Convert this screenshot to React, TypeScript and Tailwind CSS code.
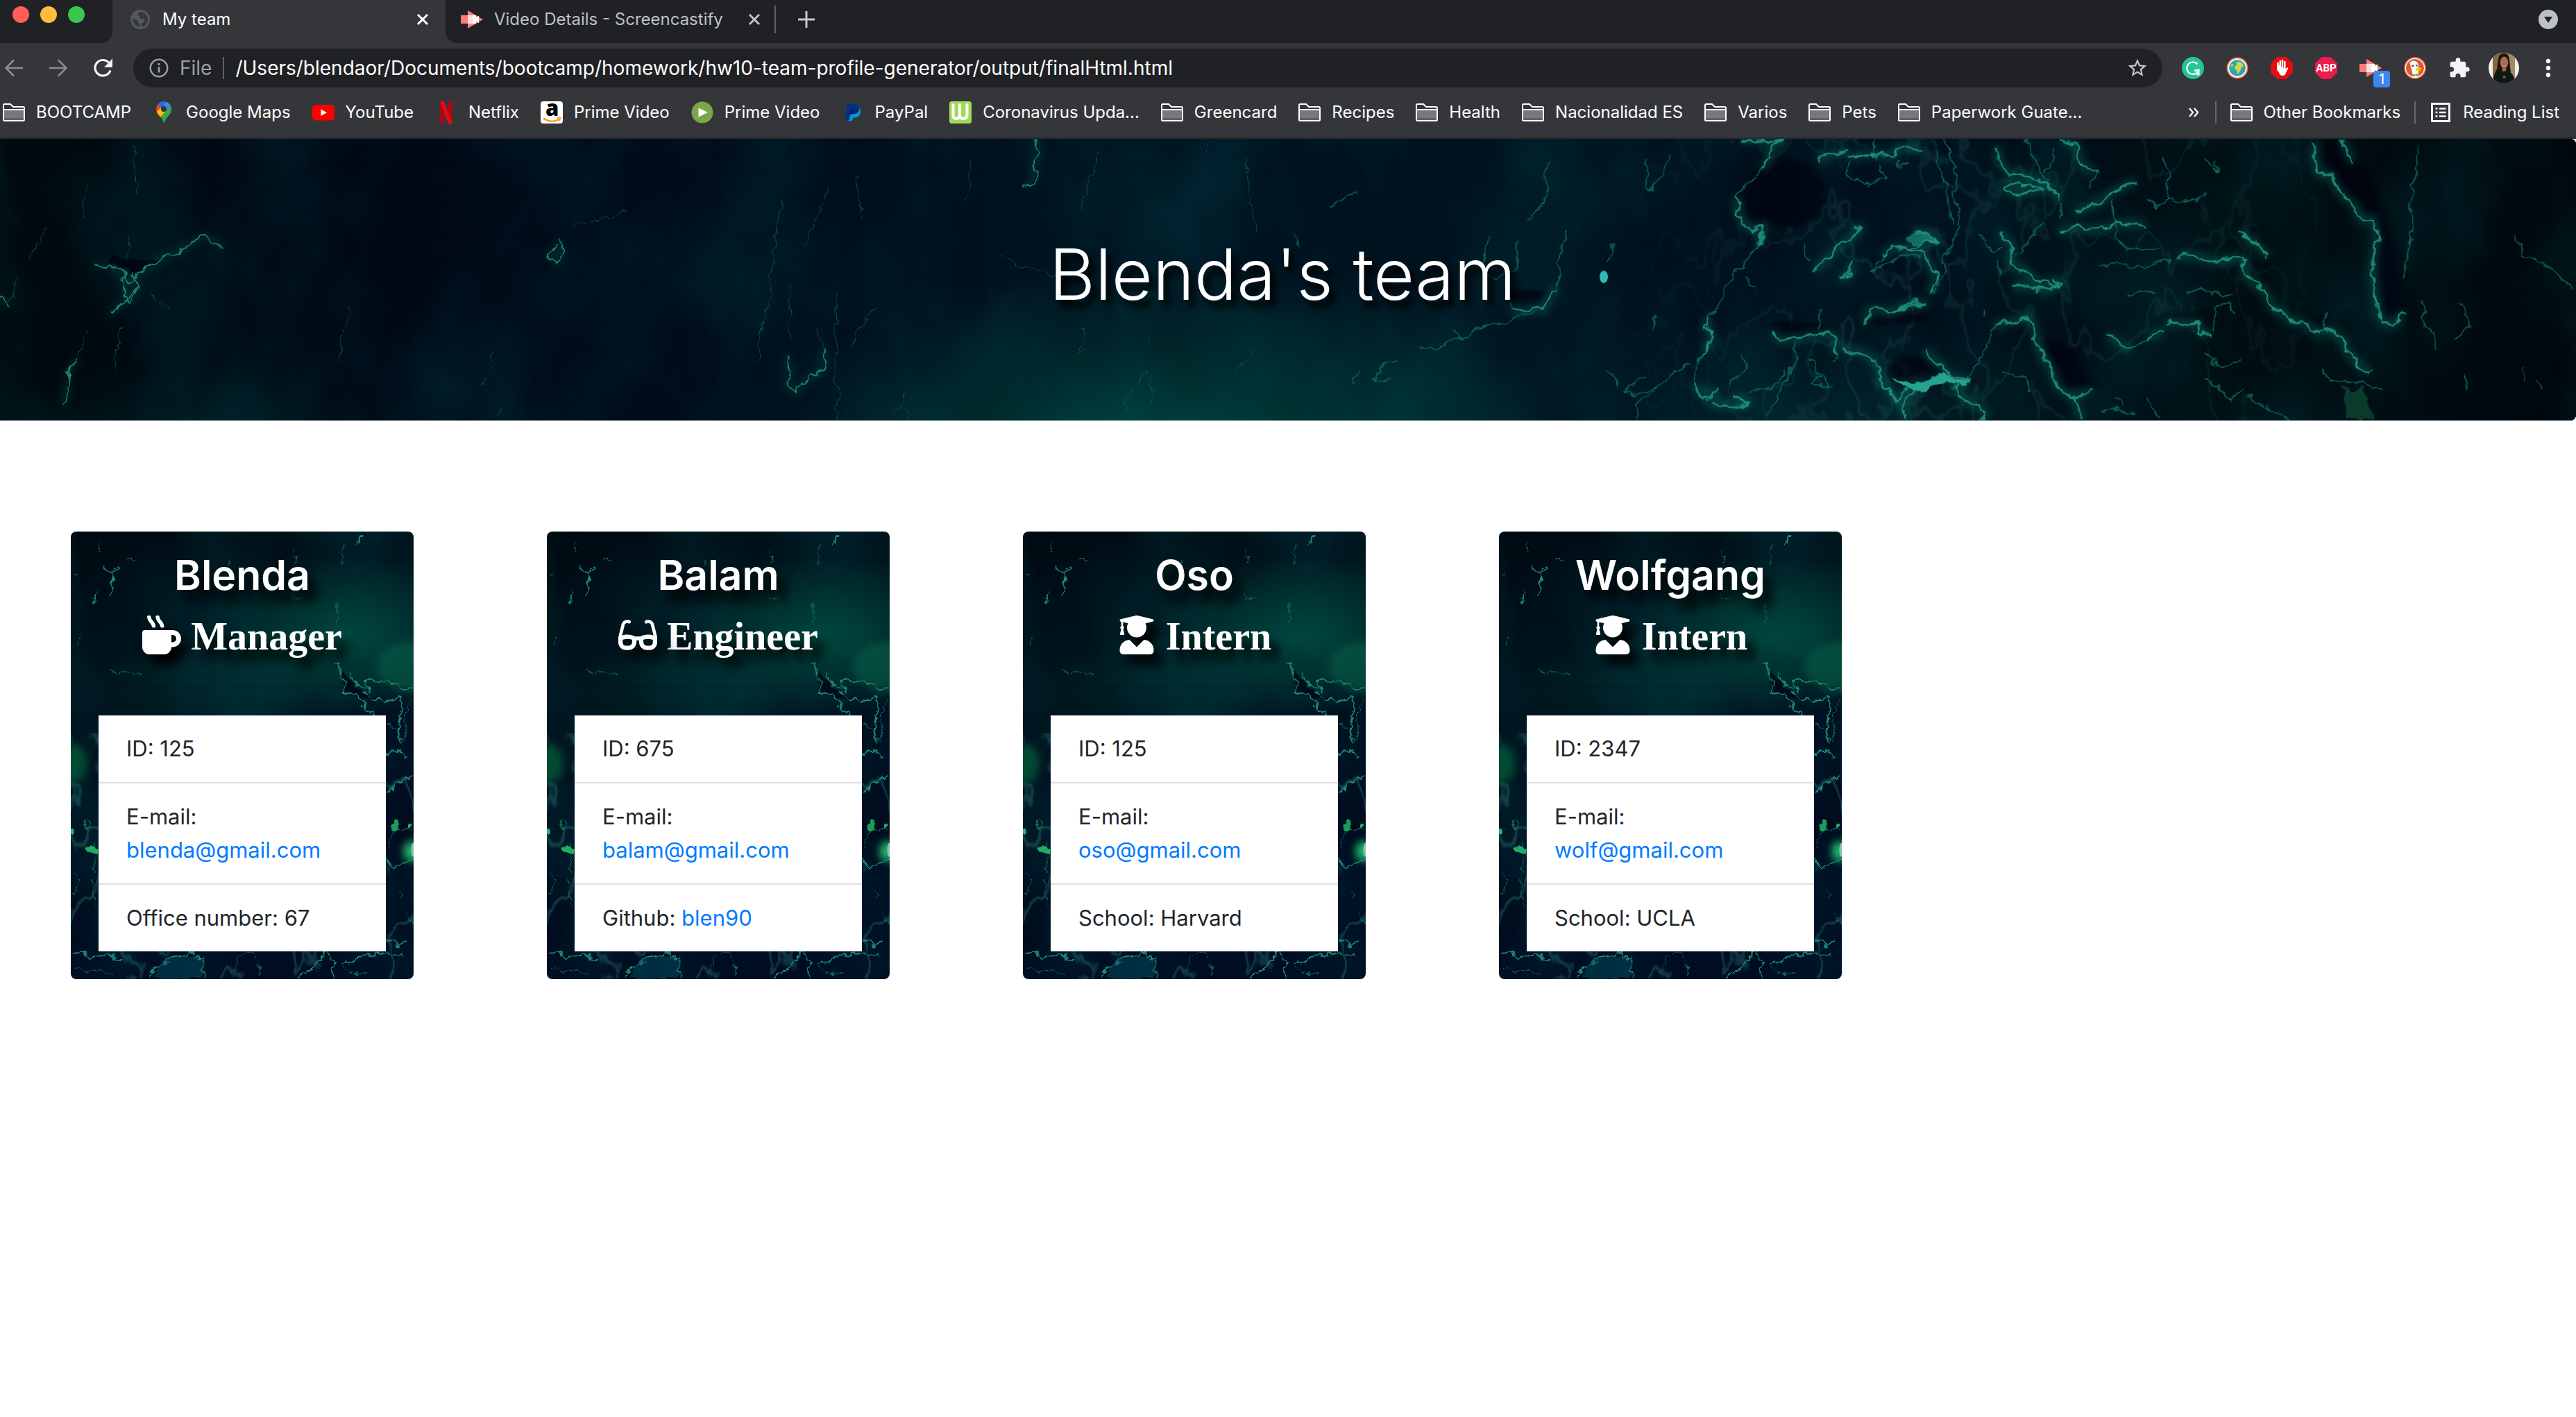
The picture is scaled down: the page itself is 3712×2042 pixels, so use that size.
import type { ReactNode } from "react";
import { FaGlasses, FaMugHot, FaUserGraduate } from "react-icons/fa";
import { MdExtension, MdStarBorder } from "react-icons/md";

/* ---------- painted-metal texture ---------- */

const heroLeft = [
  "M115 575 L132 580 L145 605 L158 645 L178 590 L196 550 L225 500 L243 458 L252 455 L262 480 L270 505",
  "M150 615 L152 700 L160 730 L168 660 L160 610",
  "M168 670 L150 740 L135 790",
  "M675 500 L668 535 L676 565 L684 530 L678 470",
  "M958 960 L955 1010 L962 1030 L955 1085 L967 1130 L980 1070 L992 1055 L1000 1000 L1002 930",
  "M1258 35 L1262 90 L1255 150 L1258 200 L1245 240",
  "M95 975 L84 1040 L82 1110 L76 1180",
  "M10 760 L0 705",
];

const heroLeftFaint = [
  "M182 690 L205 770",
  "M105 240 L103 320 L98 375",
  "M165 60 L166 270",
  "M155 430 L156 540",
  "M55 420 L36 560",
  "M24 620 L12 740",
  "M110 850 L95 975",
  "M145 850 L142 980 L144 1050",
  "M700 402 L740 375 L760 340",
  "M420 750 L428 780 L418 850 L410 1000",
  "M1468 30 L1462 100",
  "M1335 85 L1325 200 L1312 350",
  "M990 850 L1002 930",
  "M948 300 L935 700 L918 1000",
  "M1005 240 L990 400 L976 490",
  "M960 660 L958 900",
  "M1015 690 L1018 1240",
  "M600 940 L598 1010 L588 1090",
  "M605 1200 L603 1240",
  "M1065 770 L1045 830 L1035 920",
  "M1398 1180 L1400 1060 L1390 1030 L1385 1100",
  "M1375 1110 L1365 1180 L1370 1210",
  "M1098 1120 L1100 1240",
  "M1100 1170 L1085 1240",
  "M1210 540 L1240 570 L1255 600 L1285 625",
  "M1310 840 L1320 850 L1312 945 L1320 950",
  "M1530 920 L1500 1030",
  "M1515 110 L1518 300 L1530 440",
  "M1180 130 L1172 300",
  "M1040 180 L1048 380",
  "M1395 860 L1394 920",
];

const heroRight = [
  "M555 35 L580 30 L605 42 L590 60 L592 110 L580 160",
  "M548 280 L552 350 L558 400 L572 425 L583 402 L578 480",
  "M515 800 L512 850 L520 880 L510 960",
  "M650 135 L655 110 L685 80",
  "M685 110 L712 95 L740 105 L745 70 L775 75",
  "M865 60 L868 130 L880 180 L905 190 L920 215 L935 260 L942 300",
  "M945 30 L960 70 L970 150 L985 180",
  "M880 230 L905 235 L920 245 L905 262 L885 268 L878 245 Z",
  "M1035 215 L1010 250 L995 290 L975 330 L960 345",
  "M940 430 L965 415 L975 425 L1000 415 L1010 400 L1035 395 L1045 410",
  "M1252 50 L1250 110 L1256 185 L1270 188 L1280 260 L1300 320 L1308 380 L1322 380 L1326 460 L1320 600 L1324 700 L1326 780 L1335 830 L1348 830 L1358 780",
  "M1285 35 L1290 80 L1297 135",
  "M1160 425 L1180 490 L1195 535",
  "M1085 535 L1110 540 L1130 560 L1165 545 L1168 620 L1175 650 L1190 690 L1200 760 L1220 810 L1240 830 L1258 870 L1270 860 L1285 900 L1290 950 L1310 1020 L1318 1040",
  "M765 437 L780 440 L795 465 L770 495 L755 510 L740 500 L725 540",
  "M755 510 L775 520 L785 580 L792 640 L785 700",
  "M695 400 L700 425 L680 480 L655 560 L645 600",
  "M690 560 L688 610 L675 640",
  "M868 430 L885 500 L880 570 L900 600 L915 650 L940 670 L935 640 L945 655 L925 690 L910 670 L885 665",
  "M705 830 L710 765 L735 785 L755 745 L765 735 L778 742 L760 750 L740 780",
  "M592 870 L602 900 L630 890 L662 870 L668 900 L670 960",
  "M678 945 L692 945 L708 965 L720 1010 L722 1060 L730 1100 L742 1165 L755 1120 L775 1085",
  "M780 940 L785 980 L800 1010 L808 1060 L830 1070",
  "M862 840 L875 825 L900 812 L905 795 L912 870 L918 960 L930 1020 L938 1100 L955 1140 L965 1200 L968 1245",
  "M950 1140 L975 1125 L980 1110",
  "M1000 880 L1020 930 L1030 930",
  "M1050 890 L1068 860 M1070 825 L1110 828 L1112 860 L1125 880",
  "M275 750 L288 780 L300 760 L315 770 L325 690 L333 685",
  "M500 1090 L515 1160 L525 1110 M520 1180 L550 1180 L565 1170 L545 1140",
  "M812 1090 L830 1170 L850 1200 L850 1245",
  "M765 1130 L750 1200 L755 1245",
];

const heroRightFaint = [
  "M580 160 L565 220 L548 280",
  "M578 480 L562 560 L548 600 L530 740 L515 800",
  "M510 960 L500 1000 L498 1100",
  "M440 110 L440 200 L444 260 L460 190 L465 100",
  "M715 30 L717 110",
  "M745 110 L745 160 L755 120",
  "M800 30 L810 90 L818 180 L812 280 L822 340 L820 420 L810 480 L800 560 L800 620 L788 700",
  "M790 60 L800 200 L812 400",
  "M688 130 L685 190 L705 220 L730 210 L725 130",
  "M900 30 L912 130 L928 220",
  "M935 60 L925 180",
  "M978 240 L985 180",
  "M942 300 L940 380",
  "M1005 300 L1010 400 L1008 470 L1020 500 L1065 512",
  "M1050 290 L1060 325 L1075 300 L1110 290 L1120 265",
  "M1070 110 L1075 300",
  "M1115 115 L1135 175 L1130 120",
  "M1380 50 L1372 200 L1368 350 L1370 450 L1360 560 L1358 640",
  "M1380 720 L1385 820 L1395 870 L1398 935",
  "M1425 740 L1440 840 L1420 900",
  "M1265 790 L1265 870",
  "M725 540 L715 600 L750 530 L770 545",
  "M845 440 L855 500 L870 510",
  "M870 620 L865 560",
  "M925 380 L905 470 L895 520",
  "M830 1070 L850 960 L862 840",
  "M665 1000 L670 960",
  "M1030 930 L1050 890",
  "M1128 860 L1130 760 L1145 740 L1155 780",
  "M640 980 L650 1060 L638 1090 L665 1100 L650 1040",
  "M310 770 L270 820 L235 860 L215 890 L200 920 L165 945",
  "M205 850 L215 890",
  "M135 985 L120 1020 L107 1075 L130 1080",
  "M343 430 L335 560 L333 680",
  "M400 480 L392 560",
  "M250 450 L240 560 L255 640 L280 600 L285 480",
  "M320 120 L318 300 L295 380",
  "M90 260 L55 330",
  "M15 440 L20 500",
  "M395 1035 L405 1095",
  "M90 1030 L85 1090",
  "M440 1060 L410 1130 L445 1125 L470 1060 L490 1000",
  "M430 1245 L425 1180 L450 1130",
  "M540 1110 L560 1000 L555 960",
  "M585 1245 L600 1150 L620 1000 L618 920",
  "M565 1130 L600 1090 L610 1040",
  "M1115 960 L1130 1000 L1150 1010 L1165 980",
  "M1118 1075 L1140 1120 L1150 1160 L1165 1100",
  "M1170 1150 L1200 1200 L1220 1245",
  "M1260 1020 L1270 1075 L1310 1090 L1330 1120",
  "M1025 695 L1060 690 M1095 690 L1115 685 L1150 710",
  "M990 580 L1010 570 L1045 585 L1080 550",
  "M870 1040 L900 1060 L905 1120",
  "M1005 1150 L1020 1180 M1045 1140 L1060 1245",
  "M990 1195 L1015 1210 L1035 1220",
  "M1430 1040 L1436 1110 M1500 1030 L1505 1070 M1520 1060 L1527 1110",
  "M1495 450 L1505 530 L1540 590 L1565 680",
  "M450 780 L445 860 M650 750 L650 840 M850 770 L850 800",
  "M560 620 L572 690 M630 480 L635 560",
];

const heroShadows = [
  "M560 230 L590 100 L640 140 L660 240 L650 380 L620 410 L583 402 L558 395 Z",
  "M592 815 L665 835 L662 870 L630 890 L602 900 Z",
  "M710 765 L735 785 L755 770 L780 810 L740 830 L705 835 Z",
  "M925 890 L960 940 L985 1100 L955 1135 L938 1100 Z",
  "M740 1065 L780 1040 L800 1030 L785 980 L760 960 L735 1000 Z",
  "M1256 60 L1285 40 L1320 200 L1350 500 L1358 780 L1338 830 L1326 600 L1322 380 L1280 250 Z",
  "M270 680 L325 690 L310 750 L285 770 Z",
  "M1225 800 L1265 800 L1258 860 Z",
  "M1072 800 L1110 770 L1128 860 L1110 820 Z",
];

const cardCracks = [
  "M190 172 L215 180 L228 190 L250 175 L256 182 L232 198 L228 240 L220 270",
  "M1125 480 L1150 495 L1150 530 L1165 545 L1165 580 L1220 590 L1240 615 L1280 650",
  "M1190 520 L1205 545 L1245 560 L1270 575 L1250 545 L1270 535 L1290 545 L1340 540 L1370 550 L1385 545 L1400 570 L1445 560",
  "M1240 575 L1290 600 L1345 605 L1390 590 L1392 640 L1385 700 L1390 740",
  "M1335 775 L1390 765 L1415 790",
  "M1335 905 L1360 880 L1400 860 L1445 850",
  "M1335 1115 L1365 1150 L1390 1130 L1445 1115",
  "M375 1495 L400 1465 L440 1455 L470 1428 L520 1430 L550 1415 L560 1432 L605 1430 L600 1450 L590 1470 L605 1500",
  "M975 1495 L1030 1475 L1065 1440 L1085 1415 L1105 1415 L1112 1430 L1130 1445 L1110 1465 L1120 1500",
  "M1155 1455 L1200 1445 L1240 1425 L1330 1420 L1400 1425",
  "M62 1415 L110 1418 L140 1435 L220 1420 L240 1440 L265 1440",
  "M1335 1375 L1385 1385 L1375 1400 L1410 1380",
  "M160 250 L150 290 L165 280",
  "M1215 100 L1228 90 L1230 65",
];

const cardFaint = [
  "M290 152 L318 150",
  "M175 90 L172 125",
  "M75 200 L90 195",
  "M90 425 L100 400",
  "M1162 100 L1155 170",
  "M1138 290 L1132 350",
  "M960 120 L970 160",
  "M700 150 L695 170",
  "M215 500 L250 515 L300 510 L350 520",
  "M950 250 L965 280 L995 270",
  "M1335 680 L1370 690 L1400 730 L1415 700",
  "M1410 740 L1412 640 L1430 600",
  "M1335 1080 L1375 1020 L1440 1020",
  "M1380 1215 L1400 1230 L1390 1245",
  "M705 1480 L735 1455 L740 1430 L765 1415 L800 1420 L820 1450 L825 1490",
  "M1155 1460 L1200 1490 L1260 1480",
  "M80 1460 L120 1480 L180 1475 L230 1490",
  "M1420 1290 L1440 1330",
  "M70 1160 L100 1180 L80 1230 M145 1180 L165 1260",
  "M160 1060 L158 1160",
];

function TextureFilters() {
  return (
    <svg aria-hidden="true" className="absolute size-0">
      <defs>
        <filter id="rough" x="-5%" y="-5%" width="110%" height="110%">
          <feTurbulence type="fractalNoise" baseFrequency="0.05" numOctaves="3" seed="4" result="n" />
          <feDisplacementMap in="SourceGraphic" in2="n" scale="18" xChannelSelector="R" yChannelSelector="G" />
        </filter>
        <filter id="rough-fine" x="-5%" y="-5%" width="110%" height="110%">
          <feTurbulence type="fractalNoise" baseFrequency="0.1" numOctaves="3" seed="9" result="n" />
          <feDisplacementMap in="SourceGraphic" in2="n" scale="12" xChannelSelector="R" yChannelSelector="G" />
        </filter>
        <filter id="soft" x="-50%" y="-50%" width="200%" height="200%">
          <feGaussianBlur stdDeviation="6" />
        </filter>
        <filter id="veins" x="0" y="0" width="100%" height="100%">
          <feTurbulence type="fractalNoise" baseFrequency="0.012 0.007" numOctaves="4" seed="21" />
          <feColorMatrix values="0 0 0 0 0.06  0 0 0 0 0.5  0 0 0 0 0.42  1 0 0 0 0" />
          <feComponentTransfer>
            <feFuncA type="table" tableValues="0 0 0 0 0 0 0 0 0 0 0 0 0 0 0.6 0 0 0 0 0 0 0 0 0 0 0 0 0 0 0" />
          </feComponentTransfer>
        </filter>
        <filter id="mottle" x="0" y="0" width="100%" height="100%">
          <feTurbulence type="fractalNoise" baseFrequency="0.006 0.004" numOctaves="6" seed="2" />
          <feColorMatrix values="0 0 0 0 0  0 0 0 0 0.2  0 0 0 0 0.22  0 1.6 0 0 -0.55" />
        </filter>
      </defs>
    </svg>
  );
}

function Strokes({ paths, className }: { paths: string[]; className: string }) {
  return (
    <g className={className} fill="none" strokeLinejoin="round">
      {paths.map((d) => (
        <path key={d} d={d} vectorEffect="non-scaling-stroke" />
      ))}
    </g>
  );
}

function HeroTexture() {
  return (
    <svg
      aria-hidden="true"
      viewBox="0 0 3712 406"
      preserveAspectRatio="xMidYMin slice"
      className="absolute inset-0 size-full"
    >
      <defs>
        <linearGradient id="hero-base">
          <stop offset="0" stopColor="#000a0f" />
          <stop offset="0.12" stopColor="#000915" />
          <stop offset="0.28" stopColor="#000d1b" />
          <stop offset="0.45" stopColor="#001320" />
          <stop offset="0.6" stopColor="#00121e" />
          <stop offset="0.75" stopColor="#000e1a" />
          <stop offset="0.86" stopColor="#000f14" />
          <stop offset="1" stopColor="#00070d" />
        </linearGradient>
        <radialGradient id="hero-glow">
          <stop offset="0" stopColor="#00443f" />
          <stop offset="0.5" stopColor="#00302f" stopOpacity="0.7" />
          <stop offset="1" stopColor="#00302f" stopOpacity="0" />
        </radialGradient>
        <linearGradient id="hero-fade">
          <stop offset="0.62" stopColor="#000" />
          <stop offset="0.72" stopColor="#fff" />
          <stop offset="0.85" stopColor="#bbb" />
          <stop offset="0.93" stopColor="#000" />
        </linearGradient>
        <mask id="hero-mask">
          <rect width="3712" height="406" fill="url(#hero-fade)" />
        </mask>
      </defs>
      <rect width="3712" height="406" fill="url(#hero-base)" />
      <ellipse cx="1700" cy="440" rx="640" ry="250" fill="url(#hero-glow)" />
      <ellipse cx="300" cy="430" rx="300" ry="120" fill="url(#hero-glow)" opacity="0.3" />
      <ellipse cx="2650" cy="430" rx="420" ry="180" fill="url(#hero-glow)" opacity="0.4" />
      <rect width="3712" height="406" filter="url(#mottle)" opacity="0.2" />
      <g mask="url(#hero-mask)">
        <rect width="3712" height="406" filter="url(#veins)" opacity="0.22" />
      </g>
      <g transform="translate(1850 -10) scale(1.1875 0.3333)">
        {heroShadows.map((d) => (
          <path key={d} d={d} fill="#00030a" opacity="0.6" filter="url(#soft)" />
        ))}
      </g>
      <g filter="url(#soft)" opacity="0.4">
        <g transform="translate(1850 -10) scale(1.1875 0.3333)">
          <Strokes paths={heroRight} className="stroke-[#0c6a5c] stroke-[14px]" />
        </g>
        <g transform="translate(0 -10) scale(1.186 0.3333)">
          <Strokes paths={heroLeft} className="stroke-[#08483f] stroke-[10px]" />
        </g>
      </g>
      <g filter="url(#rough)">
        <g transform="translate(0 -10) scale(1.186 0.3333)">
          <path d="M125 550 L195 550 L160 620 Z" fill="#00020a" opacity="0.7" />
          <Strokes paths={heroLeftFaint} className="stroke-[#0d5c55] stroke-1 opacity-80" />
          <Strokes paths={heroLeft} className="stroke-[#1a8570] stroke-2" />
        </g>
        <g transform="translate(1850 -10) scale(1.1875 0.3333)">
          <Strokes paths={heroRightFaint} className="stroke-[#0d6259] stroke-2" />
          <Strokes paths={heroRight} className="stroke-[#1b8c79] stroke-[3px]" />
          <path d="M740 1065 L765 1080 L800 1040 L812 1070 L835 1075 L822 1100 L800 1090 L765 1130 Z" fill="#25a390" />
          <path d="M1285 1100 L1310 1110 L1318 1190 L1325 1245 L1290 1245 Z" fill="#1b7a50" opacity="0.4" />
          <path d="M765 440 L780 440 L795 465 L775 490 L755 475 Z" fill="#1f9c86" opacity="0.6" />
        </g>
      </g>
      <ellipse cx="2311" cy="199" rx="6" ry="9" fill="#35b7b3" />
    </svg>
  );
}

function CardTexture() {
  return (
    <svg
      aria-hidden="true"
      viewBox="0 0 494 644"
      preserveAspectRatio="xMidYMid slice"
      className="absolute inset-0 size-full"
    >
      <defs>
        <linearGradient id="card-base" x1="0" y1="0" x2="0.3" y2="1">
          <stop offset="0" stopColor="#000a12" />
          <stop offset="0.35" stopColor="#00151e" />
          <stop offset="0.6" stopColor="#000f1e" />
          <stop offset="1" stopColor="#000c20" />
        </linearGradient>
        <radialGradient id="card-glow">
          <stop offset="0" stopColor="#00463c" />
          <stop offset="0.5" stopColor="#003a34" stopOpacity="0.65" />
          <stop offset="1" stopColor="#003a34" stopOpacity="0" />
        </radialGradient>
      </defs>
      <rect width="494" height="644" fill="url(#card-base)" />
      <ellipse cx="400" cy="150" rx="220" ry="115" fill="url(#card-glow)" />
      <ellipse cx="230" cy="225" rx="200" ry="80" fill="url(#card-glow)" opacity="0.35" />
      <ellipse cx="490" cy="195" rx="50" ry="36" fill="#11704f" opacity="0.45" filter="url(#soft)" />
      <rect width="494" height="644" filter="url(#mottle)" opacity="0.2" />
      <rect y="290" width="494" height="354" filter="url(#veins)" opacity="0.45" />
      <ellipse cx="4" cy="334" rx="20" ry="28" fill="#064a31" filter="url(#soft)" />
      <g filter="url(#rough-fine)">
        <g transform="translate(-22 -26) scale(0.357 0.446)">
          <path d="M1140 490 L1165 520 L1240 575 L1340 606 L1225 595 L1165 580 Z" fill="#000610" opacity="0.7" />
          <Strokes paths={cardFaint} className="stroke-[#12705f] stroke-1" />
          <Strokes paths={cardCracks} className="stroke-[#1e8a76] stroke-2" />
          <path d="M470 1430 L600 1435 L590 1500 L400 1500 L410 1465 Z" fill="#0a4a5c" opacity="0.5" />
          <path d="M115 1080 L145 1070 L175 1085 L170 1100 L125 1090 Z" fill="#1fae62" />
          <circle cx="130" cy="1005" r="12" stroke="#126e48" strokeWidth="5" fill="none" />
          <circle cx="72" cy="1022" r="12" fill="#22b568" />
          <circle cx="1370" cy="1008" r="18" fill="#1a9a5c" />
          <circle cx="1432" cy="1010" r="10" fill="#22b568" />
        </g>
      </g>
      <ellipse cx="490" cy="460" rx="11" ry="15" fill="#1fb46c" filter="url(#soft)" />
      <ellipse cx="493" cy="458" rx="3" ry="10" fill="#8fc0a6" />
    </svg>
  );
}

/* ---------- browser icons ---------- */

function Icon({ children, size = "size-8" }: { children: ReactNode; size?: string }) {
  return (
    <svg aria-hidden="true" viewBox="0 0 32 32" className={`${size} shrink-0`} fill="none">
      {children}
    </svg>
  );
}

const Folder = () => (
  <Icon>
    <path d="M1 5.500q0-1.500 1.500-1.500H11l4 4h14.500q1.500 0 1.500 1.500V26.500q0 1.500-1.500 1.500h-27Q1 28 1 26.500Z" fill="#35363a" stroke="#fff" strokeWidth="2" />
    <path d="M2 13h28v14H2z" fill="#77787b" />
    <path d="M2 24h28v3H2z" fill="#616265" />
    <path d="M1 12h30" stroke="#fff" strokeWidth="2" />
  </Icon>
);

const MapPin = () => (
  <Icon>
    <path d="M5 11.500A11 11 0 0 1 7.800 4L16 11 9 19.500Q5 15 5 11.500Z" fill="#ea4335" />
    <path d="M7.600 4.200A11 11 0 0 1 19.500.800L13 8.500Z" fill="#1a73e8" />
    <path d="M19.500.800A11 11 0 0 1 26 6.500L16 18.500 13 8.500Z" fill="#4285f4" />
    <path d="M26 6.500Q29 13 24 19.500C20 24 17.500 27 16 32 15 27.500 13.500 25 11.500 22.500Z" fill="#34a853" />
    <path d="M12.600 8.600 5.600 15Q7 19 11.500 22.800L19.500 13.500Z" fill="#fbbc04" />
    <circle cx="16" cy="11" r="4.200" fill="#35363a" />
  </Icon>
);

const YouTube = () => (
  <Icon>
    <rect y="5" width="32" height="22.500" rx="5" fill="#f00" />
    <path d="m12.500 11.500 8.500 4.800-8.500 4.700z" fill="#fff" />
  </Icon>
);

const Netflix = () => (
  <Icon>
    <path d="M7 0h6v32H7zM19 0h6v32h-6z" fill="#b1060f" />
    <path d="M7 0h6l12 32h-6z" fill="#e50914" />
  </Icon>
);

const Amazon = () => (
  <Icon>
    <rect width="32" height="32" rx="4" fill="#fff" />
    <text x="7" y="21" className="fill-black font-['Open_Sans',sans-serif] text-[31px] font-extrabold">
      a
    </text>
    <path d="M4 24.500q12 8 23 1" stroke="#f90" strokeWidth="2.200" />
    <path d="M23.500 24q5-1.200 5 0t-2 4.500" stroke="#f90" strokeWidth="1.600" />
  </Icon>
);

const PlayDisc = () => (
  <Icon>
    <circle cx="16" cy="16" r="15.500" fill="#7aa748" />
    <path d="M10.500 9.500 24 16l-13.500 6.500z" fill="#fff" />
  </Icon>
);

const PayPal = () => (
  <Icon>
    <path d="M11 9h13q4 2 2.800 8-1.800 6.500-8.500 6.500h-2L15 28H9.500z" fill="#009cde" />
    <path d="M8 4h11q7 .5 6 7.500-1.500 7-9 7h-3.500L11 27H4.500z" fill="#003087" />
    <path d="M13 11h12q-1.500 7.500-9 7.500h-4.300z" fill="#012169" />
  </Icon>
);

const Worldometer = () => (
  <Icon>
    <rect width="32" height="32" rx="3.500" fill="#a5d95a" />
    <path d="M5.500 5v15q0 5 4.500 5t5-5V5m0 15q0 5 5 5t5.500-5V5" stroke="#fff" strokeWidth="4" strokeLinecap="round" />
  </Icon>
);

const ReadingList = () => (
  <Icon>
    <rect x="3.500" y="3.500" width="25" height="25" stroke="#f1f3f4" strokeWidth="3" />
    <path d="M8.500 10.500h3m2.500 0h9.500M8.500 16h3m2.500 0h9.500M8.500 21.500h3m2.500 0h9.500" stroke="#f1f3f4" strokeWidth="2.500" />
  </Icon>
);

const Screencastify = () => (
  <Icon>
    <path d="M10 3v26l22-13z" fill="#ff7f7f" />
    <path d="M0 10h17v12H0z" fill="#ff7b7b" />
    <path d="M10 10h12v3.500l4-3v11l-4-3V22H10z" fill="#fff" />
    <path d="M10 10h7v12h-7z" fill="#fdd" />
  </Icon>
);

const Close = ({ tint }: { tint: string }) => (
  <svg aria-hidden="true" viewBox="0 0 18 18" className="size-[18px]">
    <path d="m2 2 14 14M16 2 2 16" stroke={tint} strokeWidth="3" />
  </svg>
);

const BackArrow = () => (
  <Icon>
    <path d="M29 16H5M16 4.500 4.500 16 16 27.500" stroke="#8a8b8e" strokeWidth="2.600" />
  </Icon>
);

const ForwardArrow = () => (
  <Icon>
    <path d="M3 16h24M16 4.500 27.500 16 16 27.500" stroke="#8a8b8e" strokeWidth="2.600" />
  </Icon>
);

const Reload = () => (
  <Icon>
    <path d="M27 19.500A11.300 11.300 0 1 1 24.500 8" stroke="#f1f3f4" strokeWidth="3.200" />
    <path d="M30 2.500V15H18z" fill="#f1f3f4" />
  </Icon>
);

const Info = () => (
  <Icon size="size-7">
    <circle cx="16" cy="16" r="14" stroke="#9aa0a6" strokeWidth="2.800" />
    <path d="M16 14v9.500M16 8v3.300" stroke="#9aa0a6" strokeWidth="3.200" />
  </Icon>
);

const DimGlobe = () => (
  <Icon size="size-7">
    <circle cx="16" cy="16" r="16" fill="#55585c" />
    <path d="M18 3q-6 1-7 6l4 1 1 5h6q3 3-1 6l-3 1v6q10-1 11-12Q28 5 18 3ZM3.500 13q4 4 9 4v5l3 2v4.500Q4 27 3.500 13Z" fill="#37383c" />
  </Icon>
);

const Grammarly = () => (
  <Icon>
    <circle cx="16" cy="16" r="16" fill="#27c39b" />
    <path d="M22.500 10.500A8.700 8.700 0 1 0 24 19.500h-6" stroke="#fff" strokeWidth="2.200" />
    <path d="M24.500 17v8.500h-2V19.500H18" stroke="#fff" strokeWidth="2" />
  </Icon>
);

const Earth = () => (
  <Icon>
    <circle cx="16" cy="16" r="15.500" fill="#f06a43" />
    <circle cx="16" cy="16" r="13.700" fill="#fff" />
    <circle cx="16" cy="16" r="11.800" fill="#2fa3b8" />
    <path d="M15 7.500q5-1.500 8 1.500l2 4-3 2.500-1.500 4-3 4.500h-1.500l-1-5-3.500-2.500 1-3 2.500-2zM7.500 10l3 .5-1 3.500-3 1z" fill="#c9d84a" />
  </Icon>
);

const AdBlock = () => (
  <Icon>
    <path d="M9.500 0h13L32 9.500v13L22.500 32h-13L0 22.500v-13z" fill="#e40d13" />
    <path d="M9.500 10v7l3.500 8q1 2 4 2 4 0 5-4l3.500-7q-1.500-1.500-3 .5l-1 1.500" fill="#fff" />
    <path d="M10.500 18V9m3.300 8V6M17 17V5m3.300 13V7" stroke="#fff" strokeWidth="2.500" strokeLinecap="round" />
    <path d="M9.300 16h12.200v5H10z" fill="#fff" />
  </Icon>
);

const AdBlockPlus = () => (
  <Icon>
    <path d="M9.500 0h13L32 9.500v13L22.500 32h-13L0 22.500v-13z" fill="#ed1c48" />
    <text x="16" y="21" textAnchor="middle" className="fill-white font-[Roboto,sans-serif] text-[15px] font-bold">
      ABP
    </text>
  </Icon>
);

const DuckDuck = () => (
  <Icon>
    <circle cx="16" cy="16" r="16" fill="#de5833" />
    <circle cx="16" cy="16" r="13.600" stroke="#fff" strokeWidth="1.400" />
    <path d="M8.500 9q1-3.500 6-3.500 6 1 6.500 7l-1 5 2 10.500q-5 2.500-9 0L11 18Z" fill="#fff" />
    <path d="M17.500 16.500q5-2 8.500 0-2 1.500-5 2 3 .5 3.500 1.500-4 1.500-7.500-.5z" fill="#fdd20a" />
    <circle cx="12.800" cy="13" r="1.600" fill="#2d4f8e" />
    <circle cx="18.500" cy="12.500" r="1.300" fill="#2d4f8e" />
    <path d="m12.500 24 4 1.500 4.500-2v5l-4.500-1.500-4 1.500z" fill="#5bb547" />
  </Icon>
);

const Avatar = () => (
  <svg aria-hidden="true" viewBox="0 0 44 44" className="size-11">
    <defs>
      <clipPath id="avatar-clip">
        <circle cx="22" cy="22" r="22" />
      </clipPath>
    </defs>
    <g clipPath="url(#avatar-clip)">
      <path d="M0 0h44v44H0z" fill="#efeee9" />
      <path d="M6 0h32v44H6z" fill="#80683f" />
      <path d="M29 0h9v44h-9z" fill="#a18a5c" />
      <path d="M14 10q1-9 8-9t8 9l2 20v14H7q0-14 5-20z" fill="#1d120e" />
      <ellipse cx="22.500" cy="14" rx="5.800" ry="8.500" fill="#a86e55" />
      <path d="M19.500 20h6v7h-6z" fill="#9a6049" />
      <path d="M19.500 18q3 2 6 0-3 3.500-6 0z" fill="#ecd8d0" />
      <path d="M7 44q0-15 11-18 4 2 8 0 11 2 12 18z" fill="#0c1a14" />
      <circle cx="22.500" cy="35" r="2" fill="#8a5a48" />
    </g>
  </svg>
);

/* ---------- browser chrome ---------- */

const bookmarks: { label: string; icon: ReactNode }[] = [
  { label: "BOOTCAMP", icon: <Folder /> },
  { label: "Google Maps", icon: <MapPin /> },
  { label: "YouTube", icon: <YouTube /> },
  { label: "Netflix", icon: <Netflix /> },
  { label: "Prime Video", icon: <Amazon /> },
  { label: "Prime Video", icon: <PlayDisc /> },
  { label: "PayPal", icon: <PayPal /> },
  { label: "Coronavirus Upda...", icon: <Worldometer /> },
  { label: "Greencard", icon: <Folder /> },
  { label: "Recipes", icon: <Folder /> },
  { label: "Health", icon: <Folder /> },
  { label: "Nacionalidad ES", icon: <Folder /> },
  { label: "Varios", icon: <Folder /> },
  { label: "Pets", icon: <Folder /> },
  { label: "Paperwork Guate...", icon: <Folder /> },
];

const extensions: { label: string; icon: ReactNode }[] = [
  { label: "Grammarly", icon: <Grammarly /> },
  { label: "Earth", icon: <Earth /> },
  { label: "AdBlock", icon: <AdBlock /> },
  { label: "Adblock Plus", icon: <AdBlockPlus /> },
];

function Bookmark({ label, icon }: { label: string; icon: ReactNode }) {
  return (
    <button type="button" className="flex shrink-0 items-center gap-4 whitespace-nowrap">
      {icon}
      {label}
    </button>
  );
}

function ToolButton({ label, children }: { label: string; children: ReactNode }) {
  return (
    <button type="button" aria-label={label} className="relative flex w-16 shrink-0 items-center justify-center">
      {children}
    </button>
  );
}

function TabStrip() {
  return (
    <div className="flex h-[62px] bg-[#35363a]">
      <div className="flex w-[162px] shrink-0 gap-4 rounded-br-2xl bg-[#202124] pt-[9px] pl-[18px]">
        <button type="button" aria-label="Close window" className="size-6 rounded-full bg-[#ff5f57]" />
        <button type="button" aria-label="Minimize window" className="size-6 rounded-full bg-[#febc40]" />
        <button type="button" aria-label="Zoom window" className="size-6 rounded-full bg-[#3ac84c]" />
      </div>
      <div className="flex w-[480px] shrink-0 items-center pr-6 pb-[6px] pl-[26px]">
        <button type="button" className="flex items-center gap-[18px] text-white">
          <DimGlobe />
          My team
        </button>
        <button type="button" aria-label="Close tab" className="ml-auto">
          <Close tint="#fff" />
        </button>
      </div>
      <div className="flex grow items-center rounded-bl-2xl bg-[#202124] pr-[26px] pb-[6px] pl-[22px]">
        <button type="button" className="flex items-center gap-4 text-[#bdc1c6]">
          <Screencastify />
          Video Details - Screencastify
        </button>
        <button type="button" aria-label="Close tab" className="ml-9">
          <Close tint="#bdc1c6" />
        </button>
        <div className="ml-5 h-10 w-0.5 bg-[#5f6165]" />
        <button type="button" aria-label="New tab" className="ml-8">
          <svg aria-hidden="true" viewBox="0 0 24 24" className="size-6">
            <path d="M12 0v24M0 12h24" stroke="#c5c8cc" strokeWidth="3" />
          </svg>
        </button>
        <button type="button" aria-label="Search tabs" className="ml-auto">
          <svg aria-hidden="true" viewBox="0 0 28 28" className="size-7">
            <circle cx="14" cy="14" r="14" fill="#bdc1c6" />
            <path d="M8 10h12l-6 9z" fill="#202124" />
          </svg>
        </button>
      </div>
    </div>
  );
}

function Toolbar() {
  return (
    <div className="flex items-center bg-[#35363a] pt-2 pr-2 pl-1">
      <div className="mr-7 flex gap-8">
        <button type="button" aria-label="Back">
          <BackArrow />
        </button>
        <button type="button" aria-label="Forward">
          <ForwardArrow />
        </button>
        <button type="button" aria-label="Reload">
          <Reload />
        </button>
      </div>
      <div className="mr-3 flex h-14 grow items-center rounded-full bg-[#202124] pr-5 pl-[23px] text-[28px]">
        <Info />
        <label htmlFor="address" className="ml-4 text-[#9aa0a6]">
          File
        </label>
        <div className="ml-4 h-8 w-0.5 bg-[#5f6165]" />
        <input
          id="address"
          type="text"
          className="h-full min-w-0 grow bg-transparent pl-4 leading-10 text-white outline-none"
          defaultValue="/Users/blendaor/Documents/bootcamp/homework/hw10-team-profile-generator/output/finalHtml.html"
        />
        <button type="button" aria-label="Bookmark this page">
          <MdStarBorder className="size-8 text-[#c4c7cb]" />
        </button>
      </div>
      {extensions.map((e) => (
        <ToolButton key={e.label} label={e.label}>
          {e.icon}
        </ToolButton>
      ))}
      <ToolButton label="Screencastify">
        <Screencastify />
        <span className="absolute top-5 left-9 h-6 w-6 rounded-sm bg-[#3b87ee] text-center text-[20px] leading-6 text-white">
          1
        </span>
      </ToolButton>
      <ToolButton label="DuckDuckGo">
        <DuckDuck />
      </ToolButton>
      <ToolButton label="Extensions">
        <MdExtension className="size-8 text-[#f1f3f4]" />
      </ToolButton>
      <ToolButton label="Profile">
        <Avatar />
      </ToolButton>
      <ToolButton label="Menu">
        <svg aria-hidden="true" viewBox="0 0 8 28" className="h-7 w-2" fill="#f1f3f4">
          <circle cx="4" cy="4" r="3.200" />
          <circle cx="4" cy="14" r="3.200" />
          <circle cx="4" cy="24" r="3.200" />
        </svg>
      </ToolButton>
    </div>
  );
}

function BookmarkBar() {
  return (
    <div className="flex h-[74px] items-center border-b-2 border-[#28292b] bg-[#35363a] pr-6 pl-1 text-white">
      <nav aria-label="Bookmarks" className="flex gap-[31px]">
        {bookmarks.map((b, i) => (
          <Bookmark key={i} label={b.label} icon={b.icon} />
        ))}
      </nav>
      <button type="button" aria-label="More bookmarks" className="mr-6 ml-auto">
        <svg aria-hidden="true" viewBox="0 0 14 14" className="size-3.5" fill="none">
          <path d="m1 1 5 6-5 6M8 1l5 6-5 6" stroke="#f1f3f4" strokeWidth="2.400" />
        </svg>
      </button>
      <div className="mr-5 h-8 w-0.5 bg-[#66676a]" />
      <Bookmark label="Other Bookmarks" icon={<Folder />} />
      <div className="mr-5 ml-5 h-8 w-0.5 bg-[#66676a]" />
      <Bookmark label="Reading List" icon={<ReadingList />} />
    </div>
  );
}

/* ---------- page ---------- */

type Member = {
  name: string;
  role: string;
  icon: ReactNode;
  id: string;
  email: string;
  extraLabel: string;
  extra: ReactNode;
};

const roleIcon =
  "inline h-14 w-auto align-[-7px] [filter:drop-shadow(12px_14px_8px_#000)]";

const members: Member[] = [
  {
    name: "Blenda",
    role: "Manager",
    icon: <FaMugHot className={roleIcon} />,
    id: "125",
    email: "blenda@gmail.com",
    extraLabel: "Office number",
    extra: "67",
  },
  {
    name: "Balam",
    role: "Engineer",
    icon: <FaGlasses className={roleIcon} />,
    id: "675",
    email: "balam@gmail.com",
    extraLabel: "Github",
    extra: (
      <a href="https://github.com/blen90" className="text-[#007bff]">
        blen90
      </a>
    ),
  },
  {
    name: "Oso",
    role: "Intern",
    icon: <FaUserGraduate className={roleIcon} />,
    id: "125",
    email: "oso@gmail.com",
    extraLabel: "School",
    extra: "Harvard",
  },
  {
    name: "Wolfgang",
    role: "Intern",
    icon: <FaUserGraduate className={roleIcon} />,
    id: "2347",
    email: "wolf@gmail.com",
    extraLabel: "School",
    extra: "UCLA",
  },
];

function MemberCard({ member }: { member: Member }) {
  return (
    <article className="relative w-[494px] overflow-hidden rounded-lg">
      <CardTexture />
      <div className="relative">
        <header className="border-b-2 border-black/10 px-10 py-6 text-center text-white [text-shadow:12px_16px_14px_#000]">
          <h2 className="text-[59px] leading-[78px] font-semibold">{member.name}</h2>
          <h3 className="mt-4 mb-3.5 font-['Liberation_Serif',serif] text-[56px] leading-[67px] font-bold">
            {member.icon} {member.role}
          </h3>
        </header>
        <div className="p-10">
          <ul className="divide-y-2 divide-[#dfdfdf] bg-white text-[31px] leading-[48px] text-[#212529]">
            <li className="px-10 py-6">ID: {member.id}</li>
            <li className="px-10 py-6">
              E-mail:
              <a href={`mailto:${member.email}`} className="block text-[#007bff]">
                {member.email}
              </a>
            </li>
            <li className="px-10 py-6">
              {member.extraLabel}: {member.extra}
            </li>
          </ul>
        </div>
      </div>
    </article>
  );
}

export default function App() {
  return (
    <div className="min-h-screen bg-white font-[Inter,sans-serif]">
      <TextureFilters />
      <div className="text-[24px] leading-[32px]">
        <TabStrip />
        <Toolbar />
        <BookmarkBar />
      </div>
      <header className="relative overflow-hidden rounded-r-lg bg-[#000d18] py-32 pr-4">
        <HeroTexture />
        <h1 className="relative mb-4 text-center text-[102px] leading-[134px] font-light text-white [text-shadow:8px_10px_10px_#000]">
          Blenda's team
        </h1>
      </header>
      <main className="flex flex-wrap gap-48 px-[102px] py-40">
        {members.map((m) => (
          <MemberCard key={m.name} member={m} />
        ))}
      </main>
    </div>
  );
}
